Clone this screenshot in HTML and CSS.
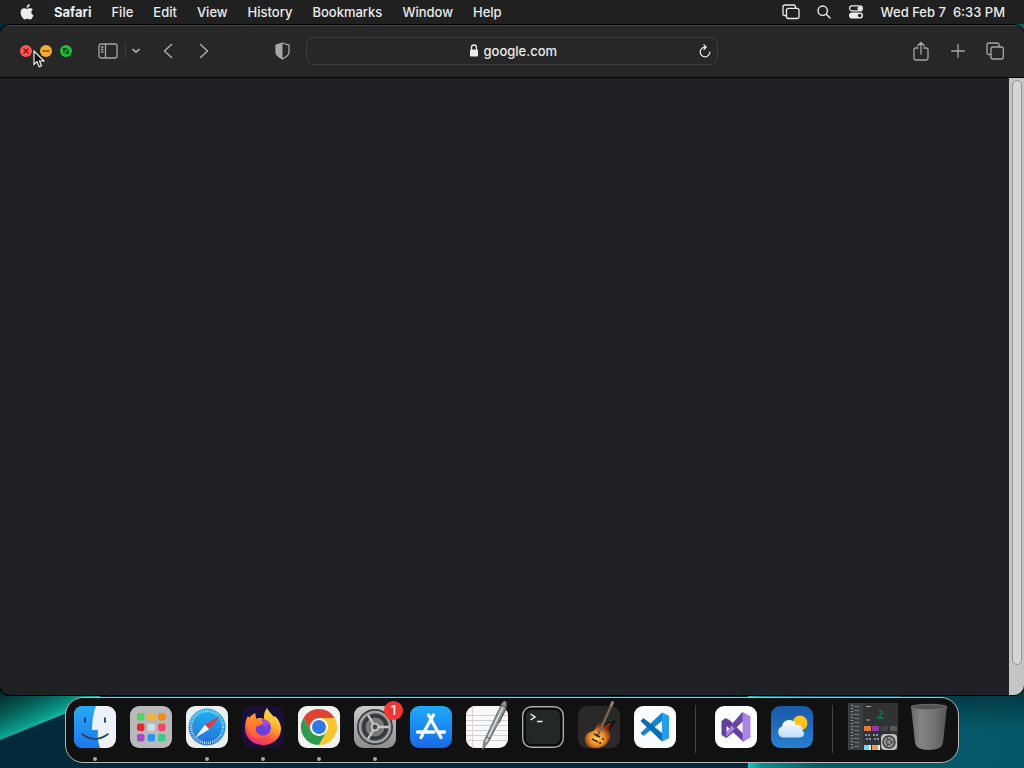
FILE: index.html
```html
<!DOCTYPE html>
<html lang="en">
<head>
  <meta charset="UTF-8">
  <meta name="viewport" content="width=device-width, initial-scale=1">
  <title>google.com</title>
  <link rel="stylesheet" href="styles.css">
</head>
<body>
  <!-- Wallpaper -->
  <svg class="wallpaper" viewBox="0 0 1024 768" preserveAspectRatio="none" aria-hidden="true">
    <defs>
      <linearGradient id="wave" gradientUnits="userSpaceOnUse" x1="14" y1="690" x2="32" y2="730">
        <stop offset="0" stop-color="#032f30"/><stop offset=".45" stop-color="#056158"/><stop offset=".85" stop-color="#0a9d8c"/><stop offset="1" stop-color="#17c9b4"/>
      </linearGradient>
      <linearGradient id="sea"><stop offset="0" stop-color="#1fc4c4"/><stop offset=".05" stop-color="#0b8b93"/><stop offset=".25" stop-color="#075b68"/><stop offset="1" stop-color="#04586a"/></linearGradient>
      <linearGradient id="shade" x2="0" y2="1"><stop offset="0" stop-color="#012024" stop-opacity=".6"/><stop offset="1" stop-color="#012024" stop-opacity="0"/></linearGradient>
    </defs>
    <rect width="1024" height="768" fill="#032a3a"/>
    <path d="M0 690H100V700L64 714L0 740Z" fill="url(#wave)"/>
    <path d="M748 690H1024V768H748Z" fill="url(#sea)"/>
    <path d="M900 690H1024V730H900Z" fill="url(#shade)"/>
    <path d="M1000 20H1024V60Z" fill="#07605f"/>
  </svg>

  <div class="desktop">
    <header class="menubar">
      <nav class="menus">
        <button class="apple" aria-label="Apple menu">
          <svg width="14" height="16" viewBox="0 0 14 16"><path fill="currentColor" d="M9.8 0c.1 1.1-.3 2-.9 2.700-.7.8-1.500 1.200-2.300 1.100C6.500 2.800 6.900 2 7.500 1.300 8.100.6 9 .1 9.800 0zM12.900 5.500c-2.300 1.400-2 4.700.6 5.700-.3.900-.8 1.900-1.400 2.700-1.500 2.100-2.500 1.500-3.600 1.100-.8-.3-1.600-.2-2.400.1-1.500.7-2.300.3-3.500-1.300C.6 11.100-.1 7.600 1.500 5.600c1-1.300 2.500-1.600 3.800-1.100 1.200.5 1.800.4 2.900 0 1.700-.6 3.500-.4 4.700 1z"/></svg>
        </button>
        <button class="app-name">Safari</button>
        <button>File</button>
        <button>Edit</button>
        <button>View</button>
        <button>History</button>
        <button>Bookmarks</button>
        <button>Window</button>
        <button>Help</button>
      </nav>
      <div class="status">
        <button aria-label="Windows">
          <svg width="18" height="16" viewBox="0 0 18 16" fill="none" stroke="currentColor" stroke-width="1.3"><path d="M4 11.500H2.500Q1 11.500 1 10V3Q1 1 3 1H11.500Q13.500 1 13.500 3V4"/><rect x="4.500" y="4.300" width="12.500" height="10.200" rx="2"/></svg>
        </button>
        <button aria-label="Spotlight">
          <svg width="14" height="14" viewBox="0 0 14 14" fill="none" stroke="currentColor" stroke-width="1.4" stroke-linecap="round"><circle cx="5.700" cy="5.700" r="4.700"/><path d="M9.300 9.300L13 13"/></svg>
        </button>
        <button aria-label="Control Center">
          <svg width="16" height="14" viewBox="0 0 16 14"><rect x="1.600" y=".9" width="12.800" height="5" rx="2.500" fill="none" stroke="currentColor" stroke-width="1.2"/><circle cx="11.700" cy="3.400" r="2.200" fill="currentColor"/><rect x="1" y="7.400" width="14" height="6.200" rx="3.100" fill="currentColor"/><circle cx="11.700" cy="10.500" r="1.800" fill="#202020"/></svg>
        </button>
        <time datetime="18:33"><span>Wed Feb 7</span><span>6:33 PM</span></time>
      </div>
    </header>

    <main class="window">
      <div class="toolbar">
        <div class="side left">
          <div class="lights">
            <button class="light red" aria-label="Close"><svg viewBox="0 0 12 12"><path d="M3.500 3.500l5 5m0-5l-5 5"/></svg></button>
            <button class="light yellow" aria-label="Minimize"><svg viewBox="0 0 12 12"><path d="M2.500 6h7"/></svg></button>
            <button class="light green" aria-label="Full screen"><svg viewBox="0 0 12 12"><path d="M3 3h5L3 8zM9 4v5H4z"/></svg></button>
          </div>
          <button class="sidebar-btn" aria-label="Sidebar">
            <svg width="20" height="16" viewBox="0 0 20 16" fill="none" stroke="currentColor" stroke-width="1.3"><rect x="1" y="1" width="18" height="14" rx="2"/><path d="M7.500 1v14M3 4h2.500M3 6.500h2.500M3 9h2.500"/></svg>
          </button>
          <button class="groups-btn" aria-label="Tab groups">
            <svg width="8" height="6" viewBox="0 0 8 6" fill="none" stroke="currentColor" stroke-width="1.7" stroke-linecap="round" stroke-linejoin="round"><path d="M1 1.500l3 2.700 3-2.700"/></svg>
          </button>
          <button class="back" aria-label="Back">
            <svg width="10" height="16" viewBox="0 0 10 16" fill="none" stroke="currentColor" stroke-width="1.6" stroke-linecap="round" stroke-linejoin="round"><path d="M8.500 1.500L1.500 8l7 6.500"/></svg>
          </button>
          <button class="forward" aria-label="Forward">
            <svg width="10" height="16" viewBox="0 0 10 16" fill="none" stroke="currentColor" stroke-width="1.6" stroke-linecap="round" stroke-linejoin="round"><path d="M1.500 1.500L8.500 8l-7 6.500"/></svg>
          </button>
          <button class="shield" aria-label="Privacy report">
            <svg width="15" height="18" viewBox="0 0 15 18"><path d="M7.500 1L1 3.200V10c0 3.400 3.500 5.500 6.500 7 3-1.500 6.500-3.600 6.500-7V3.200z" fill="none" stroke="currentColor" stroke-width="1.300" stroke-linejoin="round"/><path d="M7.500 1L1 3.200V10c0 3.400 3.500 5.500 6.500 7z" fill="currentColor"/></svg>
          </button>
        </div>

        <div class="address">
          <label class="url">
            <svg width="10" height="13" viewBox="0 0 10 13"><path d="M2.500 6V3.500a2.500 2.500 0 015 0V6" fill="none" stroke="currentColor" stroke-width="1.3"/><rect x="1" y="5.500" width="8" height="7" rx="1.200" fill="currentColor"/></svg>
            <input type="text" value="google.com" aria-label="Address">
          </label>
          <button class="reload" aria-label="Reload">
            <svg width="12" height="14" viewBox="0 0 12 14" fill="none" stroke="currentColor" stroke-width="1.2" stroke-linecap="round" stroke-linejoin="round"><path d="M7 3.200H6A4.800 4.800 0 1010.800 8M5 1l2.300 2.200L5 5.500"/></svg>
          </button>
        </div>

        <div class="side right">
          <button aria-label="Share">
            <svg width="18" height="20" viewBox="0 0 18 20" fill="none" stroke="currentColor" stroke-width="1.3" stroke-linecap="round" stroke-linejoin="round"><path d="M6 7H3.700Q2 7 2 8.700v8.600Q2 19 3.700 19h10.600q1.700 0 1.700-1.700V8.700Q16 7 14.300 7H12M9 13V1.500M5.700 4.700L9 1.500l3.300 3.200"/></svg>
          </button>
          <button aria-label="New tab">
            <svg width="14" height="14" viewBox="0 0 14 14" stroke="currentColor" stroke-width="1.3" stroke-linecap="round"><path d="M7 .7v12.600M.7 7h12.600"/></svg>
          </button>
          <button aria-label="Tab overview">
            <svg width="18" height="18" viewBox="0 0 18 18" fill="none" stroke="currentColor" stroke-width="1.3"><path d="M5 12.500H3Q1 12.500 1 10.500V3Q1 1 3 1h8q2 0 2 2v2"/><rect x="5" y="5" width="12.300" height="12" rx="2"/></svg>
          </button>
        </div>
      </div>
      <div class="page">
        <div class="view"></div>
        <div class="scrollbar"><div class="thumb"></div></div>
      </div>
      <svg class="cursor" width="12" height="18" viewBox="0 0 12 18" aria-hidden="true"><path d="M1 1v13.500l3-2.800 2.200 5.100 2.300-1L6.400 11H11z" fill="#111" stroke="#fff" stroke-width="1.1"/></svg>
    </main>

    <footer class="dock">
      <button class="app running" aria-label="Finder">
        <svg viewBox="0 0 42 42">
          <defs><linearGradient id="finder" x2="0" y2="1"><stop stop-color="#29a9f5"/><stop offset="1" stop-color="#1b78ee"/></linearGradient></defs>
          <rect width="42" height="42" rx="9" fill="#edf2f8"/>
          <path d="M9 0H22Q18 10 18 24h6q-1 10 2 18H9Q0 42 0 33V9Q0 0 9 0z" fill="url(#finder)"/>
          <path d="M11 12v4M31 12v4" stroke="#15334d" stroke-width="1.700" stroke-linecap="round"/>
          <path d="M8 28q13 10 26 0" fill="none" stroke="#28445a" stroke-width="1.600" stroke-linecap="round"/>
        </svg>
      </button>
      <button class="app" aria-label="Launchpad">
        <svg viewBox="0 0 42 42">
          <rect width="42" height="42" rx="9" fill="#b9b9bc"/>
          <rect x="7" y="7" width="7.500" height="7.500" rx="2" fill="#4cd65a"/><rect x="17.500" y="7" width="7.500" height="7.500" rx="2" fill="#f5b52d"/><rect x="28" y="7" width="7.500" height="7.500" rx="2" fill="#f28c1f"/>
          <rect x="7" y="17.500" width="7.500" height="7.500" rx="2" fill="#e02b2f"/><rect x="17.500" y="17.500" width="7.500" height="7.500" rx="2" fill="#d5dede"/><rect x="28" y="17.500" width="7.500" height="7.500" rx="2" fill="#f24864"/>
          <rect x="7" y="28" width="7.500" height="7.500" rx="2" fill="#a44bc8"/><rect x="17.500" y="28" width="7.500" height="7.500" rx="2" fill="#2c92ef"/><rect x="28" y="28" width="7.500" height="7.500" rx="2" fill="#3ec98c"/>
        </svg>
      </button>
      <button class="app running" aria-label="Safari">
        <svg viewBox="0 0 42 42">
          <defs><linearGradient id="compass" x2="0" y2="1"><stop stop-color="#20b3ee"/><stop offset="1" stop-color="#2470de"/></linearGradient></defs>
          <rect width="42" height="42" rx="9" fill="#eceef0"/>
          <circle cx="21" cy="21" r="18.500" fill="url(#compass)"/>
          <circle cx="21" cy="21" r="16" fill="none" stroke="#d7efff" stroke-width="2.600" stroke-dasharray=".8 1.294"/>
          <path d="M34 10L18.800 18.700l4.400 4.600z" fill="#e9393c"/><path d="M9 32l9.800-13.300 4.400 4.600z" fill="#f4f6f8"/>
        </svg>
      </button>
      <button class="app running" aria-label="Firefox">
        <svg viewBox="0 0 42 42">
          <defs>
            <linearGradient id="fox" x1=".85" y1="0" x2=".3" y2="1"><stop stop-color="#fff04d"/><stop offset=".4" stop-color="#ffb02f"/><stop offset=".7" stop-color="#ff553f"/><stop offset="1" stop-color="#e52b83"/></linearGradient>
            <linearGradient id="tail" x2="0" y2="1"><stop stop-color="#ff9a2a"/><stop offset="1" stop-color="#ff5a3c"/></linearGradient>
          </defs>
          <rect width="42" height="42" rx="9" fill="#1a1036"/>
          <path d="M25 2c2 4 5 6 7 9l1-1q6 6 6 13c0 9-8 16-18 16S3 32 3 22q0-8 3-12l2 3q2-4 5-6l1 6q3-2 8 0-1-6 3-11z" fill="url(#fox)"/>
          <circle cx="21" cy="21.500" r="8" fill="#6d3fd6"/>
          <path d="M20 13q7 1 8 7-2-2-4-1 2 3 0 6 1-6-6-7z" fill="#9a4be0"/>
          <path d="M4 17q2-6 9-10l1 6q4-1 7 3 0 3-6 4-2 2-1 5 2 5 8 5-8 5-13-1-4-5-5-12z" fill="url(#tail)"/>
        </svg>
      </button>
      <button class="app running" aria-label="Chrome">
        <svg viewBox="0 0 42 42">
          <rect width="42" height="42" rx="9" fill="#f2f2f2"/>
          <path d="M5.400 12A18 18 0 0136.600 12H21L13.200 25.500z" fill="#df4334"/><path d="M5.400 12A18 18 0 0021 39l7.800-13.500H13.200z" fill="#309a4e"/><path d="M36.600 12A18 18 0 0121 39l7.800-13.500L21 12z" fill="#f9c531"/>
          <circle cx="21" cy="21" r="9" fill="#fff"/><circle cx="21" cy="21" r="7" fill="#3079e5"/>
        </svg>
      </button>
      <button class="app running" aria-label="System Settings">
        <svg viewBox="0 0 42 42">
          <defs><linearGradient id="metal" x2="0" y2="1"><stop stop-color="#c9caca"/><stop offset="1" stop-color="#8b8c8e"/></linearGradient></defs>
          <rect width="42" height="42" rx="9" fill="url(#metal)"/>
          <circle cx="21" cy="21" r="18" fill="#3c3d40"/>
          <circle cx="21" cy="21" r="15" fill="#4a4c4f" stroke="#a2a5a6" stroke-width="2.500"/>
          <circle cx="21" cy="21" r="11" fill="#77797b" stroke="#35373a" stroke-width="3"/>
          <path d="M24 21h11M19.500 18.400L14 9M19.500 23.600L14 33" stroke="#c4c7c8" stroke-width="2.400"/>
          <circle cx="21" cy="21" r="3.300" fill="#444" stroke="#c4c7c8" stroke-width="1.800"/>
        </svg>
        <span class="badge">1</span>
      </button>
      <button class="app" aria-label="App Store">
        <svg viewBox="0 0 42 42">
          <defs><linearGradient id="store" x2="0" y2="1"><stop stop-color="#1faaf8"/><stop offset="1" stop-color="#1b68e8"/></linearGradient></defs>
          <rect width="42" height="42" rx="9" fill="url(#store)"/>
          <path d="M23.500 9L14.500 25M12.500 29l-1.500 2.500M18.500 9l12.500 22.500M7.500 26H24M29 26h5.500" stroke="#f5f9ff" stroke-width="3.300" stroke-linecap="round"/>
        </svg>
      </button>
      <button class="app" aria-label="TextEdit">
        <svg viewBox="0 0 42 42">
          <rect width="42" height="42" rx="9" fill="#f8f8f8"/>
          <path d="M0 9.500h42M0 14.500h42M0 19.500h42M0 24.500h42M0 29.500h42M0 34.500h42" stroke="#d0d1d3"/><path d="M6.500 0v42" stroke="#e1d2d2"/>
          <path d="M36-3l2.500-2 2 1.500-.5 6L22.500 36 16.500 44l1.500-9z" fill="#8d9296" stroke="#5b6064" stroke-width=".8"/><path d="M37 1L20 36" stroke="#e0e3e4" stroke-width="1.500"/><path d="M35-1l5 2.500M21 31l3.500 2M40 3l-7 14" stroke="#4e5356"/>
        </svg>
      </button>
      <button class="app" aria-label="Terminal">
        <svg viewBox="0 0 42 42">
          <rect x=".7" y=".7" width="40.600" height="40.600" rx="9" fill="#090a0a" stroke="#aaacad" stroke-width="1.400"/>
          <rect x="4" y="4" width="34" height="34" rx="5.500" fill="#242727"/>
          <path d="M8.500 8l4.500 3-4.500 3M15 15.500h5.500" fill="none" stroke="#eee" stroke-width="1.500"/>
        </svg>
      </button>
      <button class="app" aria-label="GarageBand">
        <svg viewBox="0 0 42 42">
          <defs><radialGradient id="guitar" cx=".45" cy=".6"><stop stop-color="#ffd64f"/><stop offset=".55" stop-color="#ed8e28"/><stop offset="1" stop-color="#7c2f16"/></radialGradient></defs>
          <rect width="42" height="42" rx="9" fill="#292929"/>
          <path d="M26 20q2-4 6-4l5-2q1 3-2 5-3 3-3 7l-2 5z" fill="#17110f"/>
          <path d="M7 35q-1-7 5-9 5-1 6-5 2-5 5-4 2 2 4 3 4-4 7-3-4 3-3 7 3 6 0 10-3 6-10 8-7 1-10-1-3-1-4-6z" fill="url(#guitar)"/>
          <path d="M19 31L33 0" stroke="#796551" stroke-width="2.400"/><path d="M31.500 0l2-5 3 1-2.500 5z" fill="#918576"/>
          <path d="M16 28l6 3M14 33l6 3" stroke="#392417" stroke-width="1.500"/><circle cx="25" cy="33" r="1" fill="#2b1b12"/><circle cx="22" cy="37" r="1" fill="#2b1b12"/>
        </svg>
      </button>
      <button class="app" aria-label="Visual Studio Code">
        <svg viewBox="0 0 42 42">
          <rect width="42" height="42" rx="9" fill="#fafcfd"/>
          <path d="M28 6.500L6.500 27l3 3L28 15z" fill="#1684d1"/><path d="M28 35.500L6.500 15l3-3L28 27z" fill="#096db8"/><path d="M28 6.500l7 3.300v22.400l-7 3.300z" fill="#279ceb"/>
        </svg>
      </button>
      <hr>
      <button class="app" aria-label="Visual Studio">
        <svg viewBox="0 0 42 42">
          <rect width="42" height="42" rx="9" fill="#fff"/>
          <path d="M6.500 15l4-3 4 2 14 14v8L11.500 20v6l5-4 3 3.500-8 6.500-5-3z" fill="#62409e"/><path d="M27.500 6l8 4.500v21l-8 4.500V15.500L14 28.500l-3 2.500.5-5z" fill="#aa83e3"/><path d="M27.500 6v9.500L20 23l-4-4z" fill="#6848a6"/>
        </svg>
      </button>
      <button class="app" aria-label="Weather">
        <svg viewBox="0 0 42 42">
          <defs><linearGradient id="sky" x2="0" y2="1"><stop stop-color="#1a58a8"/><stop offset="1" stop-color="#2780d0"/></linearGradient><linearGradient id="cloud" x2="0" y2="1"><stop stop-color="#fff"/><stop offset="1" stop-color="#bddcff"/></linearGradient></defs>
          <rect width="42" height="42" rx="9" fill="url(#sky)"/>
          <circle cx="29" cy="17" r="7.500" fill="#fbc321"/>
          <path d="M12 31.500a5.700 5.700 0 01-1-11Q12 14 18 14q5 0 7 5 6-1 6 5 2 1 2 3.500 0 4-5 4z" fill="url(#cloud)"/>
        </svg>
      </button>
      <hr>
      <button class="app wide" aria-label="Minimized window">
        <svg viewBox="0 0 50 48">
          <rect width="50" height="47" fill="#303234"/><rect width="15" height="47" fill="#3c3f41"/>
          <path d="M4 2v44" stroke="#929494" stroke-width="2" stroke-dasharray="1 2"/><path d="M8.500 3v42" stroke="#737676" stroke-width="5" stroke-dasharray="1 3"/>
          <path d="M18 3.500h5M18 17h4" stroke="#aaa"/><path d="M31 8q5 0 2 4l-3 3h6" fill="none" stroke="#126b4b" stroke-width="1.800"/>
          <rect x="16" y="23" width="7" height="5" fill="#e57a34"/><rect x="24" y="23" width="7" height="5" fill="#8d3ca5"/><rect x="33" y="23" width="7" height="5" fill="#46414e"/><rect x="42" y="23" width="7" height="5" fill="#55565e"/>
          <path d="M17 32h6M18 36h5M25 32h6M26 36h5" stroke="#7899b0" stroke-width="2" stroke-dasharray="2 1"/>
          <rect x="16" y="42" width="5" height="5" fill="#74dbef"/><rect x="24" y="42" width="7" height="5" fill="#ee9c57"/><path d="M22 42v5M31 42v5" stroke="#eee" stroke-width="2"/>
          <rect x="33" y="31" width="16" height="16" rx="4" fill="#bfc1c3"/><circle cx="41" cy="39" r="6" fill="#8f9193" stroke="#3d3f42" stroke-width="1.500"/><circle cx="41" cy="39" r="2.500" fill="none" stroke="#3d3f42"/><path d="M43 39h4M40 37l-2-4M40 41l-2 4" stroke="#3d3f42"/>
        </svg>
      </button>
      <button class="app trash" aria-label="Trash">
        <svg viewBox="0 0 42 48">
          <defs><linearGradient id="bin"><stop stop-color="#666869"/><stop offset=".25" stop-color="#828485"/><stop offset=".65" stop-color="#707273"/><stop offset="1" stop-color="#535556"/></linearGradient></defs>
          <path d="M3 3h36l-4 37q-1 7-14 7T7 40z" fill="url(#bin)"/><ellipse cx="21" cy="4" rx="18" ry="2.700" fill="#515456" stroke="#77797b" stroke-width=".8"/>
        </svg>
      </button>
    </footer>
  </div>
</body>
</html>
```
FILE: styles.css
```css
:root {
  --bar: #202020;
  --toolbar: #272727;
  --page: #202124;
  --icon: #a7a7a7;
  --text: #ececec;
}
* {
  box-sizing: border-box;
}
body {
  margin: 0;
  font-family: Inter, sans-serif;
  font-size: 13px;
  font-weight: 500;
  color: var(--text);
  background: #032a3a;
  overflow: hidden;
}
button {
  display: flex;
  align-items: center;
  justify-content: center;
  padding: 0;
  border: 0;
  background: none;
  color: inherit;
  font: inherit;
}
svg {
  display: block;
  flex: none;
}
.wallpaper {
  position: absolute;
  width: 100%;
  height: 100%;
}
.desktop {
  position: relative;
  display: flex;
  flex-direction: column;
  height: 100vh;
}

/* menu bar */
.menubar {
  display: flex;
  justify-content: space-between;
  height: 24px;
  padding: 0 19px 1px 20px;
  background: var(--bar);
}
.menus, .status {
  display: flex;
  align-items: center;
  gap: 20px;
}
.app-name {
  font-weight: 700;
}
.status {
  gap: 17px;
}
.status time {
  display: flex;
  gap: 7px;
}

/* browser window */
.window {
  position: relative;
  flex: 1;
  display: flex;
  flex-direction: column;
  min-height: 0;
  margin: 1px 0 2px;
  border-radius: 10px;
  background: var(--page);
  box-shadow: 0 0 0 1px #000;
  overflow: hidden;
}
.toolbar {
  display: flex;
  align-items: center;
  height: 53px;
  padding: 0 20px 2px;
  background: var(--toolbar);
  border-top: 1px solid #454545;
  border-bottom: 1px solid #000;
  color: var(--icon);
}
.side {
  flex: 1;
  display: flex;
  align-items: center;
}
.lights {
  display: flex;
  gap: 8px;
}
.light {
  width: 12px;
  height: 12px;
  border-radius: 50%;
}
.light svg {
  width: 12px;
  height: 12px;
  fill: none;
  stroke: #711710;
  stroke-width: 1.3;
}
.red { background: #ff5452; }
.yellow { background: #f6ad2d; }
.yellow svg { stroke: #8a5411; }
.green { background: #20be38; }
.green svg { fill: #07521a; stroke: none; }
.sidebar-btn {
  margin-left: 26px;
}
.groups-btn {
  height: 16px;
  margin-left: 7px;
  padding-left: 6px;
  border-left: 1px solid #3b3b3b;
}
.back {
  margin-left: 23px;
}
.forward {
  margin-left: 26px;
}
.shield {
  margin-left: auto;
  margin-right: 16px;
}
.address {
  display: flex;
  align-items: center;
  width: 412px;
  height: 28px;
  padding: 0 6px;
  border: 1px solid #3d3d3d;
  border-radius: 7px;
  color: var(--text);
}
.url {
  flex: 1;
  display: flex;
  align-items: center;
  justify-content: center;
  gap: 5px;
  padding-left: 14px;
}
.url input {
  width: 74px;
  padding: 0;
  border: 0;
  outline: 0;
  background: none;
  color: inherit;
  font: inherit;
}
.right {
  justify-content: flex-end;
  gap: 21px;
}
.page {
  flex: 1;
  display: flex;
}
.view {
  flex: 1;
}
.scrollbar {
  width: 15px;
  padding: 2px 2px 30px 3px;
  background: #c3c5c7;
}
.thumb {
  height: 100%;
  border: 1px solid #929597;
  border-radius: 5px;
  background: #d3d5d7;
}
.cursor {
  position: absolute;
  left: 33px;
  top: 25px;
}

/* dock */
.dock {
  display: flex;
  align-items: center;
  align-self: center;
  gap: 14px;
  height: 66px;
  margin-bottom: 5px;
  padding: 0 8px 6px;
  border: 1px solid #b5b9ba;
  border-radius: 18px;
  background: #111;
}
.dock hr {
  width: 1px;
  height: 48px;
  margin: 4px 5px 0;
  border: 0;
  background: #444;
}
.app {
  position: relative;
  width: 42px;
  height: 42px;
}
.app svg {
  width: 42px;
  height: 42px;
  overflow: visible;
}
.running::after {
  content: "";
  position: absolute;
  left: 19px;
  bottom: -13px;
  width: 4px;
  height: 4px;
  border-radius: 50%;
  background: #aaa;
}
.badge {
  position: absolute;
  top: -5px;
  right: -7px;
  width: 19px;
  height: 19px;
  border-radius: 50%;
  background: #f53437;
  color: #fff;
  line-height: 19px;
}
.wide {
  margin-left: -4px;
}
.wide, .wide svg {
  width: 50px;
  height: 48px;
}
.trash {
  margin-left: -4px;
}
.trash, .trash svg {
  height: 48px;
}
```
